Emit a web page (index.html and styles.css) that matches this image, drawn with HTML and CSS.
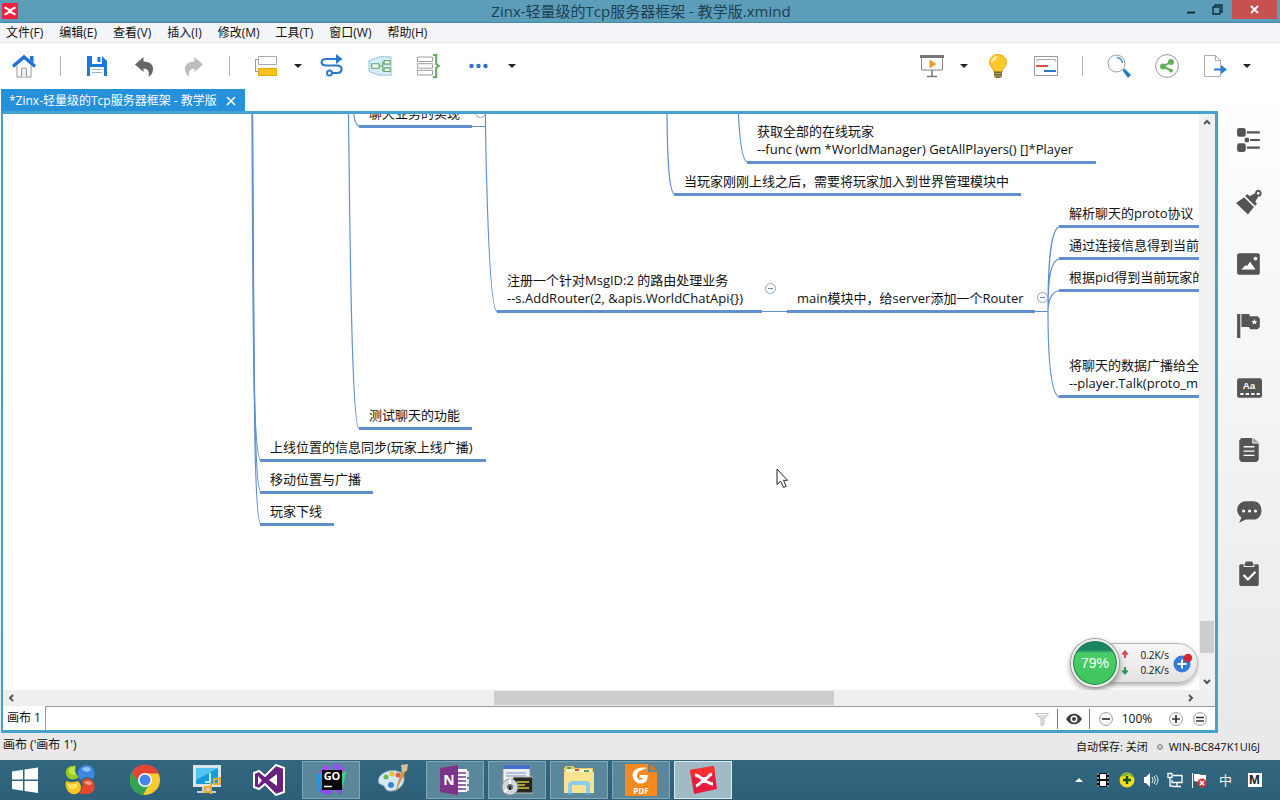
FILE: index.html
```html
<!DOCTYPE html>
<html lang="zh-CN">
<head>
<meta charset="utf-8">
<title>Zinx-轻量级的Tcp服务器框架 - 教学版.xmind</title>
<link rel="stylesheet" href="styles.css">
</head>
<body>
<header class="titlebar">
  <svg class="app-icon" viewBox="0 0 16 16"><rect width="16" height="16" rx="1" fill="#f0203f"/><path d="M2.500 4.500C5 5 6 7 8 7S11 5 13.500 4.500M2.500 11.500C5 11 6 9 8 9S11 11 13.500 11.500" fill="none" stroke="#fff" stroke-width="2"/><circle cx="8" cy="8" r="2" fill="#fff"/></svg>
  <h1 class="title">Zinx-轻量级的Tcp服务器框架 - 教学版.xmind</h1>
  <div class="window-buttons">
    <button class="win-btn" aria-label="最小化"><svg width="10" height="10" viewBox="0 0 10 10"><path d="M1 7.500h8" stroke="#12303c" stroke-width="2"/></svg></button>
    <button class="win-btn" aria-label="还原"><svg width="11" height="11" viewBox="0 0 11 11"><path d="M1 3h7v7H1zM3 3V1h7v7H8" fill="none" stroke="#12303c" stroke-width="1.400"/></svg></button>
    <button class="win-btn close" aria-label="关闭"><svg width="9" height="9" viewBox="0 0 9 9"><path d="M1 1l7 7M8 1L1 8" stroke="#fff" stroke-width="1.800"/></svg></button>
  </div>
</header>

<nav class="menubar">
  <button>文件(F)</button><button>编辑(E)</button><button>查看(V)</button><button>插入(I)</button><button>修改(M)</button><button>工具(T)</button><button>窗口(W)</button><button>帮助(H)</button>
</nav>

<div class="toolbar">
  <div class="tools">
    <button class="tool" aria-label="主页"><svg viewBox="0 0 24 24"><path d="M5 12v11h14V12" fill="#fff" stroke="#999"/><path d="M9.500 23v-9h5v9" fill="#eee" stroke="#999"/><path d="M1 12.500L12 3l11 9.500" fill="none" stroke="#2073d6" stroke-width="3.400"/><path d="M18 2h3.500v7L18 6z" fill="#2073d6"/></svg></button>
    <span class="sep"></span>
    <button class="tool" aria-label="保存"><svg viewBox="0 0 24 24"><path d="M2 2h15l5 5v15H2z" fill="#1a78e0"/><path d="M7 2h10v8H7z" fill="#fff"/><path d="M12.500 3h3v5h-3z" fill="#1a78e0"/><path d="M5 13h14v9H5z" fill="#fff"/><path d="M7 15.500h10M7 18.500h10" stroke="#9ab3ce"/></svg></button>
    <button class="tool" aria-label="撤销"><svg viewBox="0 0 24 24"><path d="M2 10.500L10.500 3v4.500c7 0 10 4 9.500 8.500-.5 3.500-2 5.500-4.500 7 1.500-5-.5-8.500-5-8.500V18z" fill="#666"/></svg></button>
    <button class="tool" aria-label="重做"><svg viewBox="0 0 24 24"><path d="M22 10.500L13.500 3v4.500c-7 0-10 4-9.500 8.500.5 3.500 2 5.500 4.500 7-1.500-5 .5-8.500 5-8.500V18z" fill="#bdbdbd"/></svg></button>
    <span class="sep"></span>
    <button class="tool" aria-label="主题"><svg viewBox="0 0 24 24"><path d="M4 5.500H1.500v12H4" fill="none" stroke="#999"/><path d="M4.500 2.500h18v8h-18z" fill="#fff" stroke="#aaa"/><path d="M4.500 14.500h18v7h-18z" fill="#fbc41c" stroke="#e2a80c"/></svg></button>
    <button class="caret" aria-label="更多主题"></button>
    <button class="tool" aria-label="联系"><svg viewBox="0 0 24 24"><path d="M17 5H6.500C0 5 0 11.500 6.500 11.500H17c6 0 6 7.500 0 7.500h-5" fill="none" stroke="#2b78cf" stroke-width="2.200"/><path d="M16 0l6.500 5L16 10z" fill="#2b78cf"/><circle cx="9.500" cy="19" r="2.500" fill="#fff" stroke="#2b78cf" stroke-width="2"/></svg></button>
    <button class="tool" aria-label="外框"><svg viewBox="0 0 26 24"><path d="M1 6.500L12 2h13v20H12L1 18z" fill="#d5ecfb" stroke="#3a8ac8" stroke-dasharray="1 1"/><path d="M12 12h4M20 8h-4v9h2" fill="none" stroke="#62a860" stroke-width="1.200"/><path d="M4 9.500h8v5H4zM17.500 6h6.500v4h-6.500zM17.500 14h6.500v4h-6.500z" fill="#eef8fd" stroke="#62a860" stroke-width="1.200"/></svg></button>
    <button class="tool" aria-label="概要"><svg viewBox="0 0 24 24"><path d="M1.500 3h15v4.500h-15zM1.500 9.700h15v4.500h-15zM1.500 16.400h15V21h-15z" fill="#fff" stroke="#a0a0a0"/><path d="M17 1h3.200v9l2.500 2-2.500 2v9H17" fill="none" stroke="#62a860" stroke-width="2"/></svg></button>
    <button class="tool wide" aria-label="更多"><svg viewBox="0 0 28 24"><g fill="#2d72c4"><circle cx="7.500" cy="12" r="2.200"/><circle cx="14.500" cy="12" r="2.200"/><circle cx="21.500" cy="12" r="2.200"/></g></svg></button>
    <button class="caret" aria-label="展开更多"></button>
  </div>
  <div class="tools">
    <button class="tool" aria-label="演示"><svg viewBox="0 0 24 24"><path d="M1.500 3h21v13h-21z" fill="#fff" stroke="#888"/><path d="M0 1h24v3H0z" fill="#777"/><path d="M9.500 5.500v9l7-4.500z" fill="#f29a24"/><path d="M12 16v7M7 22.500h10" stroke="#777" stroke-width="1.500"/></svg></button>
    <button class="caret" aria-label="演示选项"></button>
    <button class="tool" aria-label="头脑风暴"><svg viewBox="0 0 24 24"><path d="M12 .5C7 .5 3.500 4 3.500 8.500 3.500 12 7.500 14.500 8 18h8c.5-3.500 4.500-6 4.500-9.500C20.500 4 17 .5 12 .5z" fill="#fdc72e" stroke="#eaae20"/><path d="M12 2C8 2 5 5 5 8.500L9 6z" fill="#fff0ae"/><path d="M8 17.500h8v5l-2 1.500h-4l-2-1.500z" fill="#6e6543"/><path d="M8 19.500h8M8 22h8" stroke="#c2a94b"/></svg></button>
    <button class="tool" aria-label="甘特图"><svg viewBox="0 0 24 24"><path d="M.5 2.500h23v19H.5z" fill="#fff" stroke="#999"/><path d="M3 8V5.500h18V8" fill="none" stroke="#aaa"/><path d="M2 12h12" stroke="#df5048" stroke-width="2"/><path d="M10 17h12" stroke="#2b78cf" stroke-width="2"/></svg></button>
    <span class="sep"></span>
    <button class="tool" aria-label="搜索"><svg viewBox="0 0 24 24"><circle cx="9.500" cy="9.500" r="8.500" fill="#fcfeff" stroke="#999"/><path d="M10 3.500c3 .5 5 2.500 5.500 5.500" fill="none" stroke="#3c8cd8" stroke-width="1.500"/><path d="M15.500 16.500l2-2 6.500 6.500-3 3z" fill="#2778d0"/></svg></button>
    <button class="tool" aria-label="分享"><svg viewBox="0 0 24 24"><circle cx="12" cy="12" r="11.400" fill="#fff" stroke="#999"/><path d="M16 8l-8 4.500 8 4" fill="none" stroke="#61b260" stroke-width="2"/><circle cx="16" cy="8" r="3" fill="#61b260"/><circle cx="8" cy="12.500" r="3" fill="#61b260"/><circle cx="16" cy="16.500" r="2" fill="#61b260"/></svg></button>
    <button class="tool" aria-label="导出"><svg viewBox="0 0 24 24"><path d="M1.500 1.500h11l5 5v16h-16z" fill="#fff" stroke="#aaa"/><path d="M12.500 1.500v5h5" fill="none" stroke="#aaa"/><path d="M11 15.500h8" stroke="#2580e0" stroke-width="2"/><path d="M18 11l6 4.500-6 4.500z" fill="#2580e0"/></svg></button>
    <button class="caret" aria-label="导出选项"></button>
  </div>
</div>

<main class="workspace">
  <section class="editor">
    <div class="tabs"><div class="tab"><span>*Zinx-轻量级的Tcp服务器框架 - 教学版</span><button class="tab-close" aria-label="关闭标签"><svg width="10" height="10" viewBox="0 0 10 10"><path d="M1 1l8 8M9 1L1 9" stroke="#fff" stroke-width="1.600"/></svg></button></div></div>
    <div class="frame">
      <div class="viewport">
        <div class="canvas">
          <div class="map">
            <svg class="edges" width="1300" height="700" viewBox="0 0 1300 700">
              <g fill="none" stroke="#5f8fd2" stroke-width="1.200">
                <path d="M252 0V114C253 340 253 460 261 460.500"/><path d="M252.500 0V114C254 370 254 492 261 492.500"/><path d="M252.500 0V114C254 400 254 524 261 524.500"/>
                <path d="M348.500 0V114C350 250 352 428 359 428.500"/>
                <path d="M353 100C353 118 355 126 360 126.500"/>
                <path d="M472 126.500h14M485.500 100V127C487 210 490 311 497 311.500"/>
                <path d="M667 100C667 160 669 194 675 194.500"/>
                <path d="M738 100C739 140 742 162 748 162.500"/>
                <path d="M762 311.500h26M1034 311.500h14"/>
                <path d="M1048 311.500C1048 258 1051 228 1060 226.500M1048 311.500C1048 275 1051 260 1060 258.500M1048 311.500C1048 298 1053 291 1060 290.500M1048 311.500C1048 360 1051 396 1060 397.500"/>
              </g>
            </svg>
            <div class="node n-chat">聊天业务的实现</div>
            <div class="node n-players">获取全部的在线玩家<br>--func (wm *WorldManager) GetAllPlayers() []*Player</div>
            <div class="node n-online">当玩家刚刚上线之后，需要将玩家加入到世界管理模块中</div>
            <div class="node n-msg">注册一个针对MsgID:2 的路由处理业务<br>--s.AddRouter(2, &amp;apis.WorldChatApi{})</div>
            <div class="node n-main">main模块中，给server添加一个Router</div>
            <div class="node n-proto">解析聊天的proto协议</div>
            <div class="node n-conn">通过连接信息得到当前</div>
            <div class="node n-pid">根据pid得到当前玩家的</div>
            <div class="node n-talk">将聊天的数据广播给全<br>--player.Talk(proto_m</div>
            <div class="node n-test">测试聊天的功能</div>
            <div class="node n-sync">上线位置的信息同步(玩家上线广播)</div>
            <div class="node n-move">移动位置与广播</div>
            <div class="node n-off">玩家下线</div>
            <button class="fold f-chat" aria-label="折叠"></button>
            <button class="fold f-msg" aria-label="折叠"></button>
            <button class="fold f-main" aria-label="折叠"></button>
            <svg class="pointer" width="14" height="21" viewBox="0 0 14 21"><path d="M1 1v15.500l3.700-3.300L7.500 19.500l2.700-1.200-2.700-6h4z" fill="#fff" stroke="#222"/></svg>
          </div>
          <div class="meter">
            <div class="rates">
              <svg width="8" height="26" viewBox="0 0 8 26"><path d="M4 8V3M1.500 4.500L4 1.500l2.500 3" fill="none" stroke="#dc4a50" stroke-width="2"/><path d="M4 17v5M1.500 20.500L4 23.500l2.500-3" fill="none" stroke="#2c9a58" stroke-width="2"/></svg>
              <div class="rate-text">0.2K/s<br>0.2K/s</div>
              <button class="boost" aria-label="加速"><svg width="20" height="20" viewBox="0 0 20 20"><circle cx="9" cy="11" r="8.500" fill="#2f7be0"/><path d="M9 6.500v9M4.500 11h9" stroke="#fff" stroke-width="2"/><circle cx="15" cy="5" r="4.200" fill="#dc2430"/></svg></button>
            </div>
            <div class="ball"><span>79%</span></div>
          </div>
        </div>
        <div class="vscroll"><button class="arrow" aria-label="向上"><svg width="8" height="6" viewBox="0 0 8 6"><path d="M1 5l3-3 3 3" fill="none" stroke="#555" stroke-width="2"/></svg></button><div class="vthumb"></div><button class="arrow" aria-label="向下"><svg width="8" height="6" viewBox="0 0 8 6"><path d="M1 1l3 3 3-3" fill="none" stroke="#555" stroke-width="2"/></svg></button></div>
        <div class="hscroll"><button class="arrow" aria-label="向左"><svg width="6" height="8" viewBox="0 0 6 8"><path d="M5 1L2 4l3 3" fill="none" stroke="#555" stroke-width="2"/></svg></button><div class="hthumb"></div><button class="arrow" aria-label="向右"><svg width="6" height="8" viewBox="0 0 6 8"><path d="M1 1l3 3-3 3" fill="none" stroke="#555" stroke-width="2"/></svg></button></div>
        <div class="corner"></div>
      </div>
      <footer class="sheetbar">
        <button class="sheet">画布 1</button>
        <div class="zoombar">
          <button class="zb" aria-label="筛选"><svg width="16" height="16" viewBox="0 0 16 16"><path d="M1.500 2.500h13L10 8v5.500l-3 1V8z" fill="#ddd" stroke="#c4c4c4"/><path d="M3.500 3.500h9" stroke="#fff"/></svg></button>
          <button class="zb eye" aria-label="显示"><svg width="16" height="12" viewBox="0 0 16 12"><path d="M0 6C4-1 12-1 16 6 12 13 4 13 0 6z" fill="#3b3f44"/><circle cx="8" cy="6" r="3.500" fill="#fff"/><circle cx="8" cy="6" r="2" fill="#3b3f44"/></svg></button>
          <button class="zb" aria-label="缩小"><svg width="14" height="14" viewBox="0 0 14 14"><circle cx="7" cy="7" r="6.400" fill="#fff" stroke="#999"/><path d="M3 7h8" stroke="#333" stroke-width="1.700"/></svg></button>
          <span class="percent">100%</span>
          <button class="zb" aria-label="放大"><svg width="14" height="14" viewBox="0 0 14 14"><circle cx="7" cy="7" r="6.400" fill="#fff" stroke="#999"/><path d="M3 7h8M7 3v8" stroke="#333" stroke-width="1.700"/></svg></button>
          <button class="zb" aria-label="原始大小"><svg width="14" height="14" viewBox="0 0 14 14"><circle cx="7" cy="7" r="6.400" fill="#fff" stroke="#999"/><path d="M3 5.500h8M3 9h8" stroke="#333" stroke-width="1.700"/></svg></button>
        </div>
      </footer>
    </div>
  </section>
  <aside class="sidebar">
    <button class="side" aria-label="大纲"><svg viewBox="0 0 24 24"><g fill="#555"><rect x="1" y="1" width="8" height="8" rx="2"/><rect x="1" y="15" width="8" height="8" rx="2"/><rect x="8" y="10" width="4" height="4" rx="1"/><path d="M10 4h12v2H10zM13 11h9v2h-9zM10 18h12v2H10z"/></g></svg></button>
    <button class="side" aria-label="格式"><svg viewBox="0 0 24 24"><path d="M10.500 4.500l9 9-2 2-9-9zM7.500 7.500l9 9-5.500 7L0 13z" fill="#555"/><path d="M12 7l5.500-3c.5-5 7-4 6 1-.5 2-2 2-3 2l-3 5.500z" fill="#555"/><circle cx="20.500" cy="4" r="1.200" fill="#fff"/></svg></button>
    <button class="side" aria-label="图片"><svg viewBox="0 0 24 24"><rect x="1" y="2" width="21" height="20" rx="2" fill="#555"/><path d="M5 17l4-4 1 1 3-4 5 7z" fill="#fff"/><circle cx="18" cy="7" r="1.700" fill="#fff"/></svg></button>
    <button class="side" aria-label="图标"><svg viewBox="0 0 24 24"><path d="M1 1h3v22H1zM5 1h7.500v2H20l2 2v8l-2 2h-7l-1-2H5z" fill="#555"/><path d="M17 5.500l.8 1.800h2l-1.500 1.300.5 2-1.800-1.100-1.800 1.100.5-2-1.500-1.300h2z" fill="#fff"/></svg></button>
    <button class="side" aria-label="标签"><svg viewBox="0 0 24 24"><rect x="1" y="3" width="23" height="18" rx="2" fill="#555"/><text class="badge" x="12" y="13" text-anchor="middle">Aa</text><path d="M4 17.500h18" stroke="#fff" stroke-width="2" stroke-dasharray="3 2"/></svg></button>
    <button class="side" aria-label="备注"><svg viewBox="0 0 24 24"><path d="M5 1h10v5h6v15l-2 2H5l-2-2V3z" fill="#555"/><path d="M16 1l5 4h-5z" fill="#999"/><path d="M7 9h10M7 13h10M7 17h10" stroke="#fff" stroke-width="1.200"/></svg></button>
    <button class="side" aria-label="评论"><svg viewBox="0 0 24 24"><path d="M9 2h7c10 0 10 17 0 17H9l-6 3 2-5C-2 13 1 2 9 2z" fill="#555"/><g fill="#fff"><circle cx="7" cy="11" r="1.400"/><circle cx="12.500" cy="11" r="1.400"/><circle cx="18" cy="11" r="1.400"/></g></svg></button>
    <button class="side" aria-label="任务"><svg viewBox="0 0 24 24"><path d="M4 3h4l1-2.500h6L16 3h4l1 1v18l-1 1H4l-1-1V4z" fill="#555"/><path d="M7.500 3v2h9V3" fill="none" stroke="#eee"/><path d="M7 13l4 4 7-7" fill="none" stroke="#fff" stroke-width="2"/></svg></button>
  </aside>
</main>

<footer class="statusbar">
  <span>画布 ('画布 1')</span>
  <span class="save-state"><span>自动保存: 关闭</span><i class="dot"></i><span>WIN-BC847K1UI6J</span></span>
</footer>

<nav class="taskbar">
  <div class="apps">
    <button class="task start" aria-label="开始"><svg viewBox="0 0 32 32"><path d="M3 7.500l11-1.700V15.500H3zM15.500 5.500L29 3.500v12H15.500zM3 17h11v9.700L3 25zM15.500 17H29v12l-13.500-2z" fill="#fff"/></svg></button>
    <button class="task first" aria-label="四叶草"><svg viewBox="0 0 32 32"><path d="M2 10C1 4 6 1 12 2c-2 5 0 8 3 11-4 4-12 3-13-3z" fill="#97cc20"/><path d="M5 5c2-2 4-2 6-2-1 4 0 6 1 8-4 1-8-2-7-6z" fill="#c0e552"/><path d="M15 5c4-6 13-5 15 1 1 4 0 7-1 9-5-3-9-2-12 1-4-3-4-8-2-11z" fill="#3d87e0"/><path d="M18 5c3-3 8-3 9 1-3 3-7 2-9-1z" fill="#8fc1f5"/><path d="M2 17c5 2 9 1 12 0 4 4 4 9 0 12-6 4-14-2-12-12z" fill="#f8c420"/><path d="M4 20c4 1 7 0 9-1 1 4-1 6-4 6-3 1-5-2-5-5z" fill="#ffe45c"/><path d="M18 17c3-4 10-3 12 2 2 6-1 11-7 11-3 0-6 0-8-1 4-4 4-8 3-12z" fill="#e2492f"/><path d="M20 18c3-2 7-1 8 2-3 2-6 1-8-2z" fill="#f49a80"/></svg></button>
    <button class="task" aria-label="Chrome"><svg viewBox="0 0 32 32"><circle cx="16" cy="16" r="15" fill="#fcc934"/><path d="M16 16L3 8.500A15 15 0 0 0 14 31l7-12z" fill="#34a352"/><path d="M3 8.500A15 15 0 0 1 30 9.500H16a7 7 0 0 0-6.500 9z" fill="#e24435"/><circle cx="16" cy="16" r="7" fill="#fff"/><circle cx="16" cy="16" r="5.500" fill="#4586ee"/></svg></button>
    <button class="task" aria-label="远程桌面"><svg viewBox="0 0 32 32"><path d="M2 1h28v22H2z" fill="#dbe5e9"/><path d="M11 23h10v4h4v2H6v-2h5z" fill="#c5d2d8"/><path d="M5 4h22v16H5z" fill="#179bdb"/><path d="M5 4h22L5 16z" fill="#55c5ef"/><path d="M19 9v9h-5" fill="none" stroke="#fff" stroke-width="1.500"/><path d="M23 15h6v5h-6zM14 23h6v5h-6zM20 19v11M29 13v8" fill="none" stroke="#edaa24" stroke-width="2"/></svg></button>
    <button class="task" aria-label="Visual Studio"><svg viewBox="0 0 32 32"><path d="M1 9l5-2 6 5L23 1l8 3v24l-8 3-11-11-6 5-5-2z" fill="#6a217d" stroke="#fff" stroke-width="2"/><path d="M5 12v9l4-4.500zM16 16l8-6v12z" fill="#fff"/></svg></button>
    <button class="task open" aria-label="GoLand"><svg viewBox="0 0 32 32"><path d="M2 12L10 1l7 3z" fill="#a64ef5"/><path d="M1 11l7-2v17l-5 2z" fill="#2397df"/><path d="M17 0h8l5 7-4 10z" fill="#8c55f0"/><path d="M25 10l6-3-3 16z" fill="#36d485"/><path d="M6 23l14 1-6 7-9-3zM19 24l9 1-3 6z" fill="#8b4bf0"/><rect x="7" y="6" width="20" height="20" fill="#080808"/><text class="go" x="17" y="16" text-anchor="middle">GO</text><path d="M9 22.500h8" stroke="#fff" stroke-width="1.500"/></svg></button>
    <button class="task" aria-label="画图"><svg viewBox="0 0 32 32"><path d="M3 12C10 4 26 5 27 14c1 8-8 14-15 13-5-1-3-5-7-6-5-1-4-6-2-9z" fill="#d8e8f2" stroke="#8ba8b8"/><circle cx="9" cy="13" r="2.500" fill="#65b847"/><circle cx="15" cy="10" r="2.500" fill="#e5bd35"/><circle cx="21" cy="11" r="2.500" fill="#e05f44"/><circle cx="14" cy="21" r="3" fill="#3685d6"/><path d="M18 29l5-18 3-9 4 2-4 9z" fill="#d89444"/><path d="M24 1l7-1-1 7-5 1z" fill="#d6be92"/></svg></button>
    <button class="task open" aria-label="OneNote"><svg viewBox="0 0 32 32"><path d="M16 5h12v23H16z" fill="#fff"/><path d="M19 9h8M19 13h8M19 17h8M19 21h8M19 25h8" stroke="#743985" stroke-width="1.500"/><path d="M29 7v6M29 15v5M29 22v5" stroke="#fff" stroke-width="1.500"/><path d="M1 4l18-3v30L1 28z" fill="#7c3489"/><text class="note" x="10" y="21" text-anchor="middle">N</text></svg></button>
    <button class="task open" aria-label="终端"><svg viewBox="0 0 32 32"><path d="M2 1h27v20H2z" fill="#eee" stroke="#8c98a2"/><path d="M2 1h27v4H2z" fill="#4271cd"/><path d="M5 9h20M5 12h20" stroke="#7593cf"/><path d="M12 13h20v16H12z" fill="#242820" stroke="#bbb"/><path d="M16 18h12M16 21h8M16 24h12" stroke="#dac53d" stroke-width="1.500"/><circle cx="9" cy="23" r="8" fill="#d3d7db" stroke="#8c989f"/><path d="M9 15v8l-6 5" fill="none" stroke="#fff" stroke-width="2"/><circle cx="9" cy="23" r="3" fill="#657178"/><path d="M9 22v4" stroke="#222" stroke-width="2"/></svg></button>
    <button class="task open" aria-label="资源管理器"><svg viewBox="0 0 32 32"><path d="M1 4l2-2h7l2 2h18v25H1z" fill="#e9ca65"/><path d="M3 5h26v6H3z" fill="#fff6ca"/><path d="M1 8h30v21H1z" fill="#f9e391"/><path d="M4 4h4M21 7h5" stroke="#44a95c" stroke-width="2"/><path d="M12 6h4" stroke="#d2523c" stroke-width="2"/><path d="M7 30V21q0-2 3-2h12q3 0 3 2v9" fill="none" stroke="#8bccf0" stroke-width="4"/><path d="M5 30h5M22 30h5" stroke="#519fd4" stroke-width="2"/></svg></button>
    <button class="task open" aria-label="PDF"><svg viewBox="0 0 32 32"><path d="M0 0h23v8h9v24H0z" fill="#f58b20"/><path d="M25 0l7 6h-7z" fill="#e47612"/><path d="M22 4C11 2 6 8 8 14s10 8 14 2l1-5h-8l-1 3h4c-2 4-7 1-6-3 1-5 7-5 10-7z" fill="#fff"/><text class="pdf" x="16" y="30" text-anchor="middle">PDF</text></svg></button>
    <button class="task open active" aria-label="XMind"><svg viewBox="0 0 32 32"><path d="M3 6l24-4 3 23-23 5z" fill="#e91b3c"/><path d="M3 6l24-4 1 8L4 13z" fill="#fb3030"/><path d="M8 11c4 0 5 4 9 4s4-4 8-5M9 22c4-1 4-5 8-5s5 3 9 3" fill="none" stroke="#fff" stroke-width="3"/><circle cx="17" cy="16" r="3" fill="#fff"/></svg></button>
  </div>
  <div class="tray">
    <button aria-label="显示隐藏图标"><svg width="16" height="16" viewBox="0 0 16 16"><path d="M4 10l4-4 4 4z" fill="#fff"/></svg></button>
    <button aria-label="视频"><svg width="16" height="16" viewBox="0 0 16 16"><path d="M2 1h12v14H2z" fill="#111"/><path d="M5 2h6v5H5zM5 9h6v5H5z" fill="#fff"/><path d="M3 1v14M13 1v14" stroke="#fff" stroke-dasharray="2 2"/></svg></button>
    <button aria-label="安全卫士"><svg width="16" height="16" viewBox="0 0 16 16"><circle cx="8" cy="8" r="7.500" fill="#f2dd20"/><path d="M1 5a8 8 0 0 1 14 1L10 3z" fill="#6bb52b"/><path d="M8 4v8M4 8h8" stroke="#174e22" stroke-width="2.500"/></svg></button>
    <button aria-label="音量"><svg width="16" height="16" viewBox="0 0 16 16"><path d="M1 5h2l4-4v14l-4-4H1z" fill="#fff"/><path d="M9 5q2 3 0 6M11 4q3 4 0 8M13 3q4 5 0 10" fill="none" stroke="#dce9ee"/></svg></button>
    <button aria-label="网络"><svg width="16" height="16" viewBox="0 0 16 16"><path d="M6 3.500h9v7H5V8M10 11v3M6 14.500h8M1 1.500h4v4H1zM3 6v8h3" fill="none" stroke="#fff" stroke-width="1.300"/></svg></button>
    <button aria-label="操作中心"><svg width="16" height="16" viewBox="0 0 16 16"><path d="M1.500 1v15" stroke="#fff"/><path d="M3 2h5l2 1h5v7H8L3 9z" fill="#fff"/><circle cx="11" cy="11" r="4.500" fill="#d73540"/><path d="M9 9l4 4M13 9l-4 4" stroke="#fff" stroke-width="1.500"/></svg></button>
    <button class="ime">中</button>
    <button class="ime"><span class="ime-mode">M</span></button>
  </div>
</nav>
</body>
</html>
```
FILE: styles.css
```css
* { box-sizing: border-box; }
html, body { height: 100%; }
body {
  margin: 0;
  display: flex;
  flex-direction: column;
  overflow: hidden;
  background: #fff;
  color: #111;
  font: 12px/18px "Open Sans", "Noto Sans CJK SC", sans-serif;
}
button {
  padding: 0;
  border: 0;
  background: none;
  color: inherit;
  font: inherit;
  display: flex;
  align-items: center;
  justify-content: center;
}
svg { display: block; flex: none; }

.titlebar {
  display: grid;
  grid-template-columns: 1fr auto 1fr;
  height: 23px;
  padding-left: 2px;
  background: #5c9dba;
  border-bottom: 1px solid #4586aa;
}
.app-icon { width: 16px; height: 16px; margin-top: 3px; }
.title { margin: 0; color: #20404f; font-size: 15px; font-weight: 400; line-height: 23px; }
.window-buttons { display: flex; justify-content: flex-end; padding-right: 3px; height: 19px; }
.win-btn { width: 26px; }
.close { width: 45px; margin-left: 2px; background: #c75050; }

.menubar {
  display: flex;
  gap: 16px;
  height: 20px;
  padding: 0 6px;
  background: #f4f5f8;
  border-bottom: 1px solid #e6e7ea;
}

.toolbar { display: flex; justify-content: space-between; height: 46px; padding: 0 29px 0 12px; }
.tools { display: flex; align-items: center; gap: 24px; }
.tool { width: 24px; height: 24px; }
.tool svg { width: 100%; height: 100%; }
.wide { width: 28px; }
.sep { width: 1px; height: 20px; background: #b5b5b5; }
.caret { width: 8px; height: 24px; margin: 0 -6px 0 -8px; }
.caret:last-child { margin-right: 0; }
.caret::before { content: ""; border: 4px solid transparent; border-top-color: #222; border-bottom-width: 0; }

.workspace { flex: 1; display: flex; min-height: 0; background: linear-gradient(#fff, #fafafa 20%, #e9e9e9); }
.editor { flex: 1; min-width: 0; display: flex; flex-direction: column; padding-left: 1px; }
.tabs { display: flex; height: 22px; background: #fff; }
.tab { display: flex; align-items: center; gap: 9px; padding: 2px 9px 0 8px; background: #2691db; color: #fff; }
.tab-close { width: 10px; height: 10px; }
.frame { flex: 1; min-height: 0; display: flex; flex-direction: column; border: 3px solid #45a2cf; border-left-width: 2px; background: #fff; }
.viewport { flex: 1; min-height: 0; display: grid; grid-template: 1fr 16px / 1fr 16px; }
.canvas { position: relative; overflow: hidden; min-width: 0; background: #fff; }

/* Scrolled map layer */
.map { position: absolute; left: -3px; top: -114px; width: 1300px; height: 700px; }
.edges { position: absolute; left: 0; top: 0; }
.node {
  position: absolute;
  padding: 0 0 3px 10px;
  border-bottom: 3px solid #5f8fce;
  white-space: nowrap;
  font-size: 13px;
  line-height: 18px;
}
.n-chat { left: 359px; top: 104px; width: 113px; }
.n-players { left: 747px; top: 122px; width: 349px; }
.n-online { left: 674px; top: 172px; width: 347px; }
.n-msg { left: 497px; top: 271px; width: 265px; }
.n-main { left: 787px; top: 289px; width: 248px; }
.n-proto { left: 1059px; top: 204px; width: 200px; }
.n-conn { left: 1059px; top: 236px; width: 200px; }
.n-pid { left: 1059px; top: 268px; width: 200px; }
.n-talk { left: 1059px; top: 356px; width: 200px; }
.n-test { left: 359px; top: 406px; width: 113px; }
.n-sync { left: 260px; top: 438px; width: 226px; }
.n-move { left: 260px; top: 470px; width: 113px; }
.n-off { left: 260px; top: 502px; width: 74px; }
.fold { position: absolute; width: 11px; height: 11px; border: 1px solid #8d9fca; border-radius: 50%; background: #fff; }
.fold::before { content: ""; width: 5px; height: 1px; background: #6f7fae; }
.f-chat { left: 475px; top: 107px; }
.f-msg { left: 765px; top: 283px; }
.f-main { left: 1037px; top: 292px; }
.pointer { position: absolute; left: 776px; top: 468px; }

/* Floating network meter */
.meter { position: absolute; right: 1px; bottom: 3px; width: 127px; height: 48px; display: flex; align-items: center; }
.rates {
  flex: 1;
  display: flex;
  align-items: center;
  justify-content: flex-end;
  gap: 11px;
  height: 40px;
  margin-left: 24px;
  padding-right: 4px;
  border: 1px solid #b5b5b5;
  border-radius: 20px;
  background: linear-gradient(#f8f8f8, #e2e2e2);
  box-shadow: 0 2px 5px #0005;
}
.rate-text { font-size: 10px; line-height: 15px; }
.boost { margin-left: -7px; }
.ball {
  position: absolute;
  left: 0;
  top: 0;
  width: 48px;
  height: 48px;
  display: flex;
  align-items: center;
  justify-content: center;
  border: 2px solid #eee;
  border-radius: 50%;
  background: linear-gradient(#1b8462 0 20%, #48cd68 28%, #3fc45b);
  box-shadow: 0 0 0 1px #999, inset 0 0 0 1px #227c50, 0 3px 7px #0007;
  color: #fff;
  font: 14px "Liberation Sans", sans-serif;
}

.vscroll { display: flex; flex-direction: column; justify-content: space-between; align-items: center; background: #f0f0f1; }
.hscroll { display: flex; justify-content: space-between; align-items: center; background: #efefef; }
.corner { background: #efefef; }
.arrow { width: 16px; height: 16px; }
.vthumb { width: 14px; height: 32px; margin-top: auto; margin-bottom: 21px; background: #cdcdcd; }
.hthumb { width: 340px; height: 14px; margin-left: 126px; background: #cdcdcd; }

.sheetbar { display: flex; height: 24px; }
.sheet { width: 43px; border-right: 1px solid #999; }
.zoombar { flex: 1; display: flex; align-items: center; justify-content: flex-end; gap: 10px; padding-right: 8px; border-top: 1px solid #999; }
.zb { height: 20px; }
.eye { width: 33px; margin: 0 -1px 0 -3px; border: solid #777; border-width: 0 1px; }
.percent { width: 40px; margin: 0 2px 0 -6px; text-align: center; }

.sidebar { flex: none; width: 62px; display: flex; flex-direction: column; align-items: center; gap: 38px; padding-top: 39px; }
.side { width: 24px; height: 24px; flex: none; }
.side svg { width: 26px; height: 26px; }
.badge { fill: #fff; font: bold 9px "Liberation Sans", sans-serif; }

.statusbar { display: flex; justify-content: space-between; align-items: center; height: 27px; padding: 0 20px 3px 3px; background: #e9e9e9; }
.save-state { display: flex; align-items: center; gap: 6px; padding-top: 4px; font-size: 11px; }
.dot { width: 6px; height: 6px; border: 1px solid #888; border-radius: 50%; background: #ccc; margin-left: 3px; }

.taskbar { display: flex; justify-content: space-between; height: 40px; padding-right: 11px; background: linear-gradient(#31677f, #2d6078); }
.apps { display: flex; gap: 4px; }
.task { width: 58px; height: 38px; margin-top: 1px; }
.task svg { width: 32px; height: 32px; }
.start { width: 50px; }
.first { padding-right: 6px; }
.open { background: #5b879b; border: 1px solid #83a7b7; }
.active { background: #a0bbc6; border-color: #e0ebef; }
.go { fill: #fff; font: bold 11px "Open Sans", sans-serif; }
.note { fill: #fff; font: bold 14px "Open Sans", sans-serif; }
.pdf { fill: #fff; font: bold 8px "Open Sans", sans-serif; }
.tray { display: flex; align-items: center; color: #fff; }
.tray button { width: 24px; height: 40px; }
.tray .ime { width: 29px; font-size: 13px; }
.ime-mode { width: 14px; height: 14px; background: #fff; color: #222; font: bold 13px/14px "Liberation Sans", sans-serif; }
```
